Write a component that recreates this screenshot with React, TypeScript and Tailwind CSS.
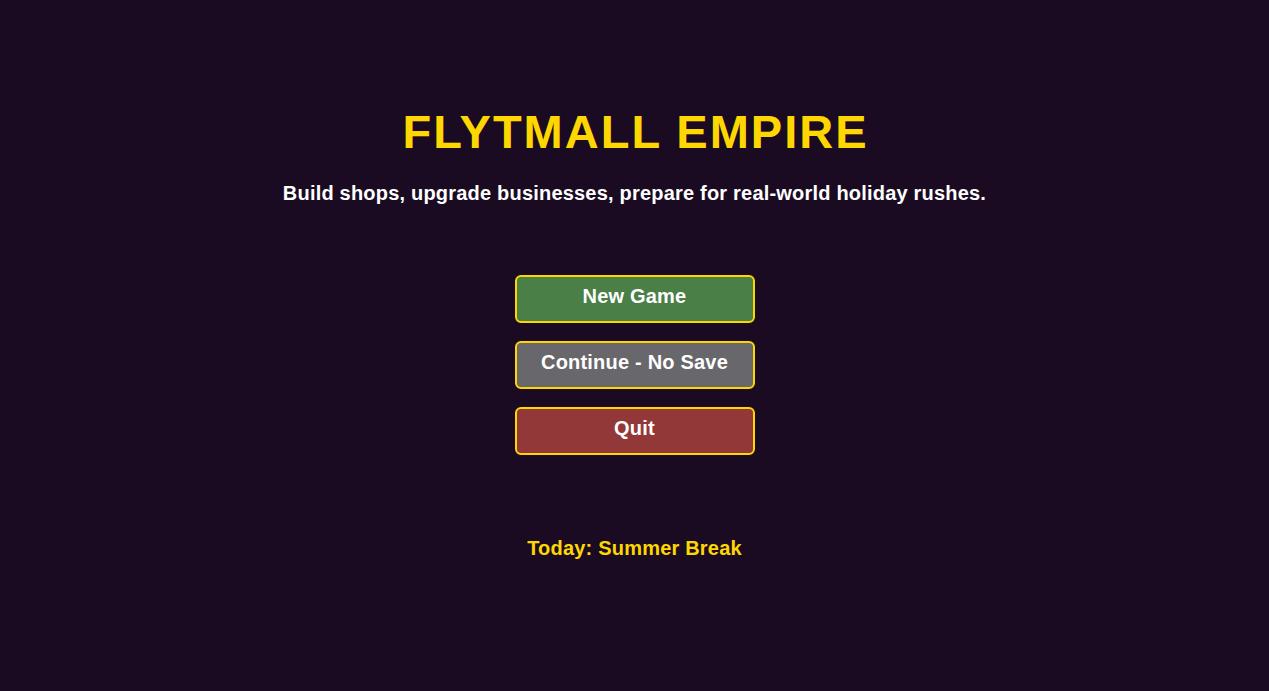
import React from "react";

const buttons = [
  { label: "New Game", bg: "bg-[#4a7f47]" },
  { label: "Continue - No Save", bg: "bg-[#68676b]" },
  { label: "Quit", bg: "bg-[#933838]" },
];

export default function App() {
  return (
    <div
      className="min-h-screen w-full bg-[#1a0b22] flex flex-col items-center pt-[108px]"
      style={{ fontFamily: '"Liberation Sans", Arial, sans-serif' }}
    >
      <h1 className="text-[47px] leading-none font-bold text-[#ffd700] tracking-[2px] pl-[2px]">
        FLYTMALL EMPIRE
      </h1>
      <p className="mt-[28px] text-[20px] leading-none font-bold text-white tracking-[0.2px]">
        Build shops, upgrade businesses, prepare for real-world holiday rushes.
      </p>

      <div className="mt-[72px] flex flex-col gap-[18px]">
        {buttons.map((b) => (
          <button
            key={b.label}
            className={`w-[240px] h-[48px] rounded-[6px] border-2 border-[#ffd700] ${b.bg} text-white text-[20px] font-bold leading-none pt-[9px] tracking-[0.2px] flex justify-center items-start`}
          >
            {b.label}
          </button>
        ))}
      </div>

      <div className="mt-[83px] text-[20px] leading-none font-bold text-[#ffd700] tracking-[0.2px]">
        Today: Summer Break
      </div>
    </div>
  );
}
